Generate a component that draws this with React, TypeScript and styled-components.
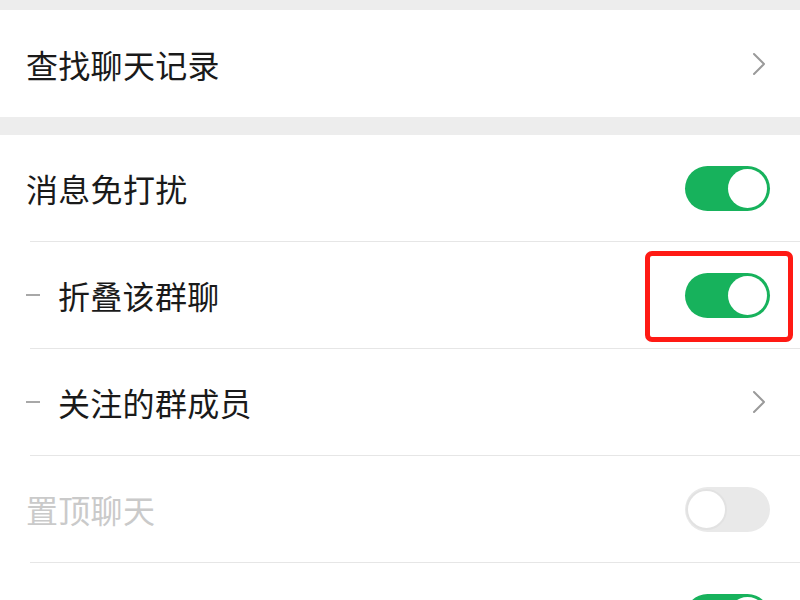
import React from "react";
import styled, { createGlobalStyle } from "styled-components";

const GlobalStyle = createGlobalStyle`
  html, body {
    margin: 0;
    padding: 0;
    background-color: #ededed;
    font-family: "Noto Sans CJK SC", "Noto Sans", sans-serif;
    overflow: hidden;
  }
`;

const Page = styled.div`
  width: 800px;
  height: 600px;
  padding-top: 10px;
  box-sizing: border-box;
  overflow: hidden;
`;

const Section = styled.div<{ $gap?: number }>`
  background: #fff;
  margin-bottom: ${(p) => p.$gap ?? 0}px;
`;

const Row = styled.div<{ $height?: number }>`
  height: ${(p) => p.$height ?? 106}px;
  display: flex;
  align-items: center;
  padding: 0 30px 0 26px;
`;

const Divider = styled.div`
  height: 1px;
  margin-left: 30px;
  background: #e6e6e6;
`;

const Dash = styled.span`
  width: 14px;
  height: 2px;
  background: #a8a8a8;
  margin-right: 18px;
  flex-shrink: 0;
`;

const Label = styled.span<{ $muted?: boolean }>`
  flex: 1;
  font-size: 32px;
  line-height: 1;
  color: ${(p) => (p.$muted ? "#cacaca" : "#1a1a1a")};
  letter-spacing: 0.3px;
`;

const Chevron = styled.svg`
  width: 14px;
  height: 24px;
  margin-right: 4px;
`;

const ToggleWrap = styled.div`
  position: relative;
  display: flex;
`;

const Track = styled.div<{ $on: boolean }>`
  width: 85px;
  height: 45px;
  border-radius: 23px;
  background: ${(p) => (p.$on ? "#17b25c" : "#e9e9e9")};
  position: relative;
`;

const Knob = styled.div<{ $on: boolean }>`
  position: absolute;
  box-sizing: border-box;
  border-radius: 50%;
  background: #fff;
  ${(p) =>
    p.$on
      ? "top: 3px; right: 3px; width: 39px; height: 39px;"
      : "top: 2px; left: 1px; width: 41px; height: 41px; border: 2px solid #e2e2e2;"}
`;

const Highlight = styled.div`
  position: absolute;
  left: -40px;
  right: -23px;
  top: -22px;
  bottom: -24px;
  border: 5px solid #ff1a14;
  border-radius: 7px;
  pointer-events: none;
`;

function Toggle({ on, marked }: { on: boolean; marked?: boolean }) {
  return (
    <ToggleWrap>
      <Track $on={on}>
        <Knob $on={on} />
      </Track>
      {marked && <Highlight />}
    </ToggleWrap>
  );
}

function Arrow() {
  return (
    <Chevron viewBox="0 0 14 24">
      <path
        d="M2 2 L12 12 L2 22"
        fill="none"
        stroke="#9a9a9a"
        strokeWidth="2"
        strokeLinecap="round"
        strokeLinejoin="round"
      />
    </Chevron>
  );
}

export default function App() {
  return (
    <Page>
      <GlobalStyle />
      <Section $gap={18}>
        <Row $height={107}>
          <Label>查找聊天记录</Label>
          <Arrow />
        </Row>
      </Section>
      <Section>
        <Row>
          <Label>消息免打扰</Label>
          <Toggle on />
        </Row>
        <Divider />
        <Row>
          <Dash />
          <Label>折叠该群聊</Label>
          <Toggle on marked />
        </Row>
        <Divider />
        <Row>
          <Dash />
          <Label>关注的群成员</Label>
          <Arrow />
        </Row>
        <Divider />
        <Row>
          <Label $muted>置顶聊天</Label>
          <Toggle on={false} />
        </Row>
        <Divider />
        <Row>
          <Label />
          <Toggle on />
        </Row>
      </Section>
    </Page>
  );
}
